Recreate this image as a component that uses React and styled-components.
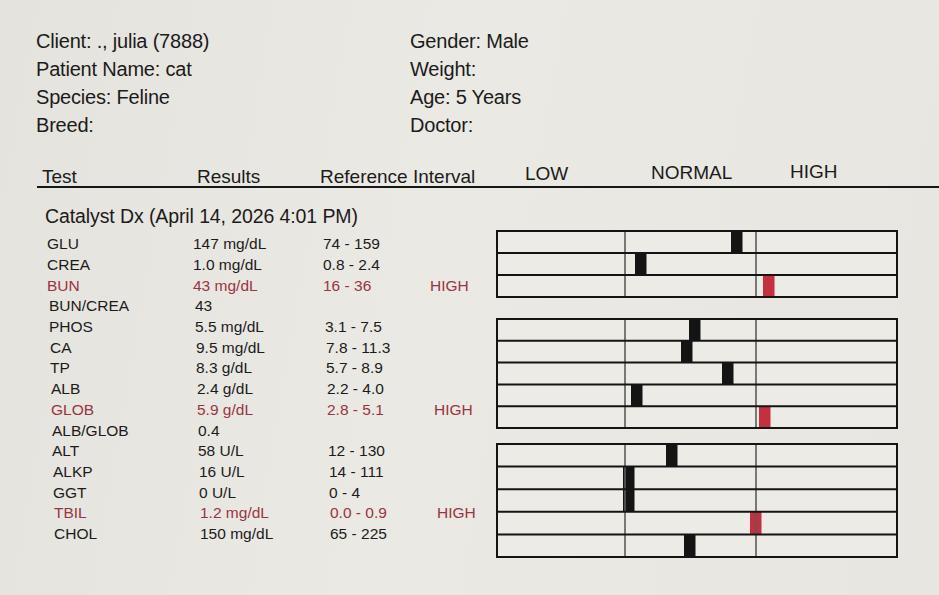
import React from "react";
import styled, { createGlobalStyle } from "styled-components";

const GlobalStyle = createGlobalStyle`
    html, body {
        margin: 0;
        padding: 0;
        background: #e7e5df;
    }
    body {
        font-family: "Liberation Sans", Arial, sans-serif;
        color: #1b1b1b;
    }
`;

const Page = styled.div`
    width: 939px;
    height: 595px;
    overflow: hidden;
    background: linear-gradient(100deg, #e5e3dd 0%, #ebe9e4 45%, #e8e6e0 100%);
    padding-top: 27px;
    box-sizing: border-box;
`;

const Info = styled.div`
    display: grid;
    grid-template-columns: 374px 1fr;
    padding-left: 36px;
    font-size: 20px;
    line-height: 28px;
    letter-spacing: -0.2px;
`;

const InfoCol = styled.div`
    display: flex;
    flex-direction: column;
`;

const Header = styled.div`
    display: grid;
    grid-template-columns: 155px 123px 205px 126px 139px 1fr;
    margin-top: 28px;
    margin-left: 37px;
    padding-left: 5px;
    font-size: 19px;
    line-height: 19px;
    border-bottom: 2px solid #161616;
`;

const HeadCell = styled.div`
    transform: translateY(${props => props.lift || 0}px);
`;

const Body = styled.div`
    display: flex;
    align-items: flex-start;
`;

const Table = styled.div`
    width: 449px;
    padding-left: 47px;
    box-sizing: content-box;
`;

const Title = styled.div`
    margin-top: 16px;
    margin-left: -2px;
    font-size: 19.5px;
    line-height: 24px;
    margin-bottom: 6px;
    letter-spacing: -0.1px;
`;

const Row = styled.div`
    display: grid;
    grid-template-columns: 146px 130px 107px 66px;
    height: 20.7px;
    align-items: center;
    font-size: 15.5px;
    color: ${props => props.$high ? "#9a3442" : "#1b1b1b"};
    padding-left: ${props => props.$indent || 0}px;
`;

const Chart = styled.div`
    display: flex;
    flex-direction: column;
    padding-top: 42px;
`;

const Group = styled.svg`
    display: block;
    margin-bottom: ${props => props.$gap || 0}px;
`;

const tests = [
    { name: "GLU", result: "147 mg/dL", ref: "74 - 159" },
    { name: "CREA", result: "1.0 mg/dL", ref: "0.8 - 2.4" },
    { name: "BUN", result: "43 mg/dL", ref: "16 - 36", high: true },
    { name: "BUN/CREA", result: "43", ref: "", indent: 2 },
    { name: "PHOS", result: "5.5 mg/dL", ref: "3.1 - 7.5", indent: 2 },
    { name: "CA", result: "9.5 mg/dL", ref: "7.8 - 11.3", indent: 3 },
    { name: "TP", result: "8.3 g/dL", ref: "5.7 - 8.9", indent: 3 },
    { name: "ALB", result: "2.4 g/dL", ref: "2.2 - 4.0", indent: 4 },
    { name: "GLOB", result: "5.9 g/dL", ref: "2.8 - 5.1", high: true, indent: 4 },
    { name: "ALB/GLOB", result: "0.4", ref: "", indent: 5 },
    { name: "ALT", result: "58 U/L", ref: "12 - 130", indent: 5 },
    { name: "ALKP", result: "16 U/L", ref: "14 - 111", indent: 6 },
    { name: "GGT", result: "0 U/L", ref: "0 - 4", indent: 6 },
    { name: "TBIL", result: "1.2 mg/dL", ref: "0.0 - 0.9", high: true, indent: 7 },
    { name: "CHOL", result: "150 mg/dL", ref: "65 - 225", indent: 7 },
];

const groups = [
    { rowH: 22, gap: 20, marks: [{ x: 235 }, { x: 139 }, { x: 267, high: true }] },
    { rowH: 21.8, gap: 14, marks: [{ x: 193 }, { x: 185 }, { x: 226 }, { x: 135 }, { x: 263, high: true }] },
    { rowH: 22.6, gap: 0, marks: [{ x: 170 }, { x: 127 }, { x: 127 }, { x: 254, high: true }, { x: 188 }] },
];

const W = 402;
const LOW_X = 129;
const HIGH_X = 260;

const BarGroup = ({ rowH, gap, marks }) => {
    const h = marks.length * rowH + 2;
    return (
        <Group width={W} height={h} viewBox={`0 0 ${W} ${h}`} $gap={gap}>
            <rect x="1" y="1" width={W - 2} height={h - 2} fill="#ecebe6" />
            {marks.map((m, i) => (
                <rect
                    key={i}
                    x={m.x}
                    y={1 + i * rowH}
                    width="11.5"
                    height={rowH}
                    fill={m.high ? "#c4303f" : "#141414"}
                />
            ))}
            <line x1={LOW_X} y1="1" x2={LOW_X} y2={h - 1} stroke="#5c5c5c" strokeWidth="1.6" />
            <line x1={HIGH_X} y1="1" x2={HIGH_X} y2={h - 1} stroke="#5c5c5c" strokeWidth="1.6" />
            {marks.slice(1).map((m, i) => (
                <line key={i} x1="1" y1={1 + (i + 1) * rowH} x2={W - 1} y2={1 + (i + 1) * rowH} stroke="#141414" strokeWidth="2" />
            ))}
            <rect x="1" y="1" width={W - 2} height={h - 2} fill="none" stroke="#141414" strokeWidth="2" />
        </Group>
    );
};

const App = () => {
    return (
        <Page>
            <GlobalStyle />
            <Info>
                <InfoCol>
                    <div>Client: ., julia (7888)</div>
                    <div>Patient Name: cat</div>
                    <div>Species: Feline</div>
                    <div>Breed:</div>
                </InfoCol>
                <InfoCol>
                    <div>Gender: Male</div>
                    <div>Weight:</div>
                    <div>Age: 5 Years</div>
                    <div>Doctor:</div>
                </InfoCol>
            </Info>

            <Header>
                <HeadCell>Test</HeadCell>
                <HeadCell>Results</HeadCell>
                <HeadCell>Reference Interval</HeadCell>
                <HeadCell lift={-3}>LOW</HeadCell>
                <HeadCell lift={-4}>NORMAL</HeadCell>
                <HeadCell lift={-5}>HIGH</HeadCell>
            </Header>

            <Body>
                <Table>
                    <Title>Catalyst Dx (April 14, 2026 4:01 PM)</Title>
                    {tests.map(t => (
                        <Row key={t.name} $high={t.high} $indent={t.indent}>
                            <span>{t.name}</span>
                            <span>{t.result}</span>
                            <span>{t.ref}</span>
                            <span>{t.high ? "HIGH" : ""}</span>
                        </Row>
                    ))}
                </Table>
                <Chart>
                    {groups.map((g, i) => <BarGroup key={i} {...g} />)}
                </Chart>
            </Body>
        </Page>
    );
};

export default App;
